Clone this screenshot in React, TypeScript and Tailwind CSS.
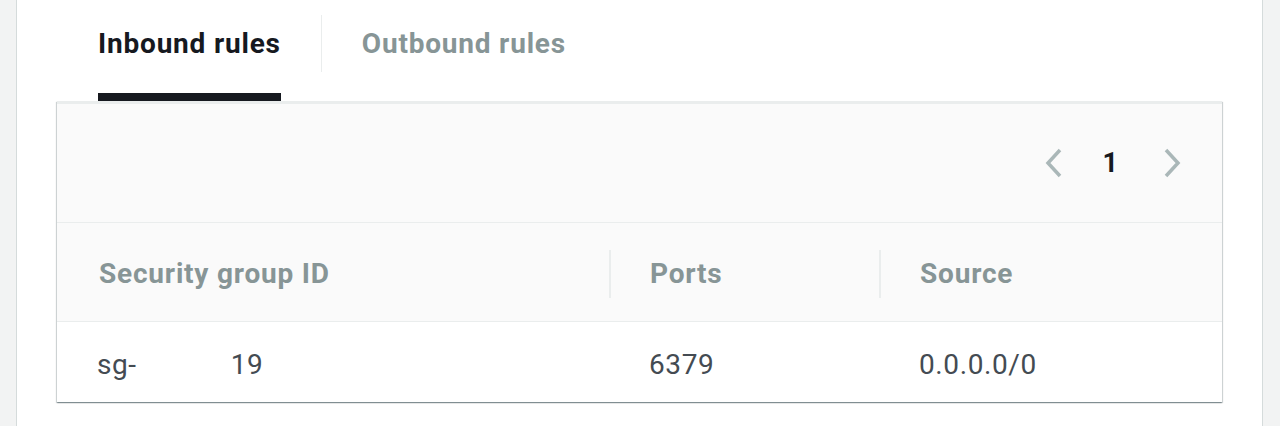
import React from "react";

export default function App() {
  const font = { fontFamily: "Roboto, 'Liberation Sans', sans-serif" };
  return (
    <div className="flex h-[426px] w-[1280px] bg-[#f2f3f3]" style={font}>
      <div className="w-[16px] shrink-0" />
      <div className="flex w-[1247px] flex-col border-x border-[#d5dbdb] bg-white px-[40px]">
        {/* Tabs */}
        <div className="flex h-[101px] items-start pl-[41px]">
          <div className="flex h-full flex-col">
            <div className="flex h-[93px] items-center pb-[6px] text-[28px] font-bold tracking-[0.8px] text-[#16191f]">
              Inbound rules
            </div>
            <div className="h-[8px] bg-[#16191f]" />
          </div>
          <div className="mx-[40px] mt-[15px] h-[57px] w-px bg-[#eaeded]" />
          <div className="flex h-[93px] items-center pb-[6px] text-[28px] font-bold tracking-[0.8px] text-[#879596]">
            Outbound rules
          </div>
        </div>
        {/* Table */}
        <div className="flex flex-col border-t-[3px] border-[#eaeded] shadow-[0_1px_1px_0_rgba(0,28,36,0.3),1px_1px_1px_0_rgba(0,28,36,0.15),-1px_1px_1px_0_rgba(0,28,36,0.15)]">
          <div className="flex h-[119px] items-center justify-end bg-[#fafafa] pr-[40px] border-b border-[#eaeded]">
            <svg width="20" height="32" viewBox="0 0 20 32" className="mr-[39px]">
              <path d="M16 3 L4 16 L16 29" fill="none" stroke="#aab7b8" strokeWidth="3.5" />
            </svg>
            <span className="text-[27px] font-bold text-[#16191f]">1</span>
            <svg width="20" height="32" viewBox="0 0 20 32" className="ml-[44px]">
              <path d="M4 3 L16 16 L4 29" fill="none" stroke="#aab7b8" strokeWidth="3.5" />
            </svg>
          </div>
          <div className="flex h-[99px] items-center bg-[#fafafa] border-b border-[#eaeded] pt-[3px] text-[28px] font-bold tracking-[0.8px] text-[#879596]">
            <div className="flex h-[48px] w-[554px] items-center border-r-2 border-[#eaeded] pl-[42px]">Security group ID</div>
            <div className="flex h-[48px] w-[270px] items-center border-r-2 border-[#eaeded] pl-[39px]">Ports</div>
            <div className="flex h-[48px] items-center pl-[39px]">Source</div>
          </div>
          <div className="flex h-[80px] items-center bg-white pt-[5px] text-[28px] tracking-[0.6px] text-[#444b52]">
            <div className="flex w-[552px] items-center pl-[40px]">
              <span>sg-</span>
              <span className="ml-[94px]">19</span>
            </div>
            <div className="w-[270px] pl-[40px]">6379</div>
            <div className="pl-[40px]">0.0.0.0/0</div>
          </div>
        </div>
      </div>
    </div>
  );
}
